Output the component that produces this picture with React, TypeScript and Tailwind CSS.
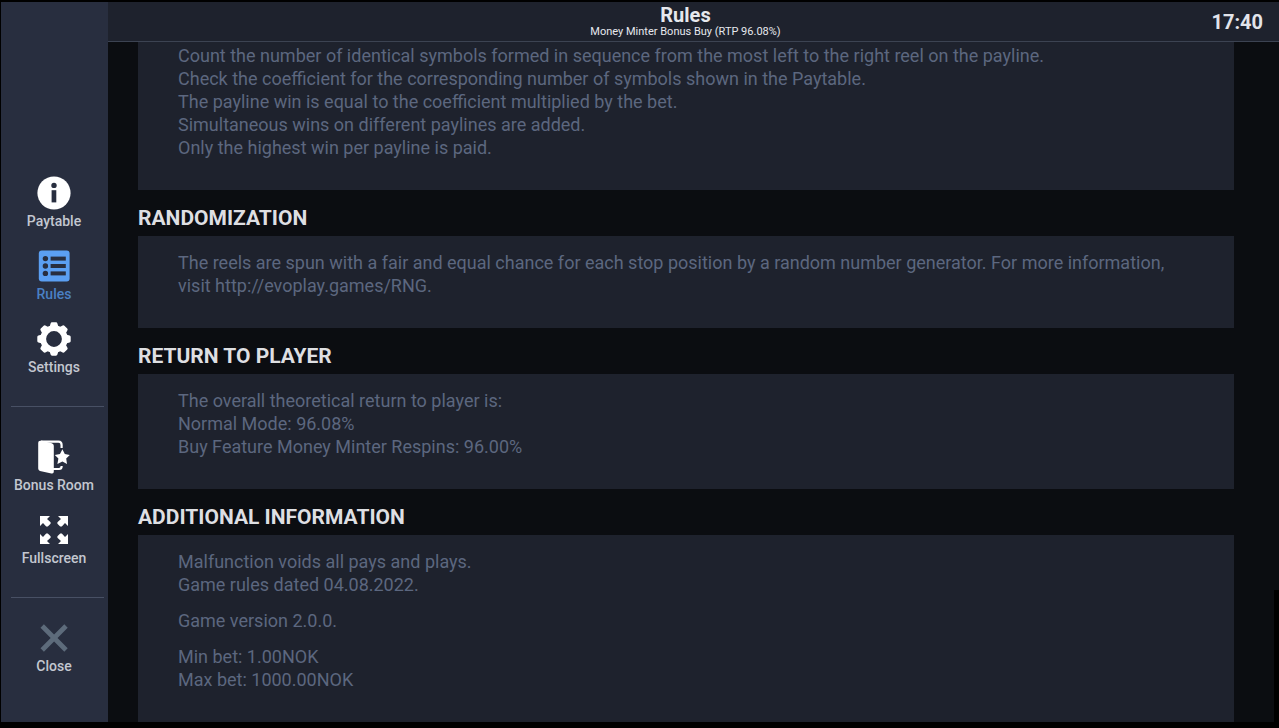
import type { ReactNode } from 'react';

function InfoIcon() {
  return (
    <svg viewBox="0 0 34 34" className="h-[34px] w-[34px]">
      <circle cx="17" cy="17" r="16.6" fill="#ffffff" />
      <circle cx="17" cy="9.4" r="2.7" fill="#282e3f" />
      <path d="M14.6 14.2h4.7v12.2h-4.7z" fill="#282e3f" />
    </svg>
  );
}

function RulesIcon() {
  return (
    <svg viewBox="0 0 34 34" className="h-[34px] w-[34px]">
      <rect x="1.8" y="1.4" width="30.8" height="31" rx="3" fill="#5b9ff2" />
      {[9.6, 17, 24.4].map((y) => (
        <g key={y} fill="#282e3f">
          <circle cx="8.4" cy={y} r="2.7" />
          <rect x="13.6" y={y - 2} width="15.2" height="4" />
        </g>
      ))}
    </svg>
  );
}

function GearIcon() {
  return (
    <svg viewBox="0 0 34 34" className="h-[34px] w-[34px]">
      <circle cx="17" cy="17" r="10.8" fill="none" stroke="#ffffff" strokeWidth="5.8" />
      {[0, 45, 90, 135, 180, 225, 270, 315].map((angle) => (
        <path
          key={angle}
          d="M12.2 6L13.6 1.4Q13.9 0.3 15 0.3H19Q20.1 0.3 20.4 1.4L21.8 6Z"
          fill="#ffffff"
          transform={`rotate(${angle} 17 17)`}
        />
      ))}
    </svg>
  );
}

function BonusRoomIcon() {
  return (
    <svg viewBox="0 0 34 34" className="h-[34px] w-[34px]">
      <path
        d="M4 1.6H21.5Q24.6 1.6 24.6 5V8M24.6 26V26.5Q24.6 29 22 29H16"
        fill="none"
        stroke="#ffffff"
        strokeWidth="2.2"
      />
      <path
        d="M3.2 0.7H5L14.8 3.2Q16.8 3.8 16.8 5.8V31.5Q16.8 34 14.4 33.4L3 30.9Q1.2 30.4 1.2 28.6V2.7Q1.2 0.7 3.2 0.7Z"
        fill="#ffffff"
      />
      <path
        d="M25.4 9.3L27.8 14.1L32.8 14.9L29.2 18.6L30 24L25.4 21.4L20.4 24L21.4 18.6L17.8 14.9L23 14.1Z"
        fill="#ffffff"
      />
    </svg>
  );
}

function FullscreenIcon() {
  return (
    <svg viewBox="0 0 34 34" className="h-[34px] w-[34px]">
      {[0, 90, 180, 270].map((angle) => (
        <path
          key={angle}
          d="M3 3H13L10 6L13.6 9.2V10.8L10.8 13.6H9.2L6 10L3 13Z"
          fill="#ffffff"
          transform={`rotate(${angle} 17 17)`}
        />
      ))}
    </svg>
  );
}

function CloseIcon() {
  return (
    <svg viewBox="0 0 34 34" className="h-[34px] w-[34px]">
      <path d="M5.2 5L29 29M29 5L5.2 29" stroke="#5d6b7b" strokeWidth="4.8" />
    </svg>
  );
}

const menuGroups = [
  [
    { label: 'Paytable', icon: InfoIcon },
    { label: 'Rules', icon: RulesIcon, active: true },
    { label: 'Settings', icon: GearIcon },
  ],
  [
    { label: 'Bonus Room', icon: BonusRoomIcon },
    { label: 'Fullscreen', icon: FullscreenIcon },
  ],
];

function MenuButton({ label, active, children }: { label: string; active?: boolean; children: ReactNode }) {
  return (
    <button type="button" className="flex w-full cursor-pointer flex-col items-center gap-[3px] pr-[7px]">
      {children}
      <span className={`text-[14px] leading-4 font-medium ${active ? 'text-[#4a80c4]' : 'text-[#c3c7d0]'}`}>
        {label}
      </span>
    </button>
  );
}

function Sidebar() {
  return (
    <nav className="ml-px flex w-[107px] shrink-0 flex-col justify-end bg-[#282e3f] pr-1 pb-12 pl-2.5">
      {menuGroups.map((group, index) => (
        <div
          key={index}
          className={`flex flex-col gap-5 border-b border-[#485064] pb-[31px] ${index > 0 ? 'pt-[33px]' : ''}`}
        >
          {group.map((item) => (
            <MenuButton key={item.label} label={item.label} active={item.active}>
              <item.icon />
            </MenuButton>
          ))}
        </div>
      ))}
      <div className="pt-[23px]">
        <MenuButton label="Close">
          <CloseIcon />
        </MenuButton>
      </div>
    </nav>
  );
}

const sections = [
  {
    title: 'Randomization',
    paragraphs: [
      [
        'The reels are spun with a fair and equal chance for each stop position by a random number generator. For more information, visit http://evoplay.games/RNG.',
      ],
    ],
  },
  {
    title: 'Return to player',
    paragraphs: [
      [
        'The overall theoretical return to player is:',
        'Normal Mode: 96.08%',
        'Buy Feature Money Minter Respins: 96.00%',
      ],
    ],
  },
  {
    title: 'Additional information',
    paragraphs: [
      ['Malfunction voids all pays and plays.', 'Game rules dated 04.08.2022.'],
      ['Game version 2.0.0.'],
      ['Min bet: 1.00NOK', 'Max bet: 1000.00NOK'],
    ],
  },
];

const paylineRules = [
  'Count the number of identical symbols formed in sequence from the most left to the right reel on the payline.',
  'Check the coefficient for the corresponding number of symbols shown in the Paytable.',
  'The payline win is equal to the coefficient multiplied by the bet.',
  'Simultaneous wins on different paylines are added.',
  'Only the highest win per payline is paid.',
];

function Lines({ lines }: { lines: string[] }) {
  return (
    <div>
      {lines.map((line) => (
        <p key={line}>{line}</p>
      ))}
    </div>
  );
}

export default function App() {
  return (
    <div className="flex h-screen bg-black pt-0.5 pb-1.5 font-['Roboto',sans-serif]">
      <Sidebar />

      <div className="flex min-w-0 flex-1 flex-col">
        <header className="grid h-10 shrink-0 grid-cols-[1fr_auto_1fr] items-center border-b border-[#3c4352] bg-[#1e222d] pr-4">
          <div className="col-start-2 text-center text-[#e6e8ed]">
            <h1 className="text-[20px] leading-5 font-bold">Rules</h1>
            <p className="text-[11px] leading-[14px]">Money Minter Bonus Buy (RTP 96.08%)</p>
          </div>
          <time className="text-right text-[20px] leading-6 font-bold text-[#e2e4ea]">17:40</time>
        </header>

        <main className="relative min-h-0 flex-1 overflow-hidden bg-[#0b0d11] pr-[45px] pl-[30px] text-[18px] leading-[23px] text-[#5c677f]">
          <div className="bg-[#1e222d] px-10 pt-0.5 pb-[31px]">
            <Lines lines={paylineRules} />
          </div>

          {sections.map((section) => (
            <section key={section.title}>
              <h2 className="pt-4 pb-1.5 text-[21px] leading-6 font-bold text-[#dedfe2] uppercase">
                {section.title}
              </h2>
              <div className="flex flex-col gap-[13px] bg-[#1e222d] px-10 pt-[15px] pb-[31px]">
                {section.paragraphs.map((lines) => (
                  <Lines key={lines[0]} lines={lines} />
                ))}
              </div>
            </section>
          ))}

          {/* Scroll thumb */}
          <div className="absolute right-0 bottom-0 h-[132px] w-[5px] bg-black" />
        </main>
      </div>
    </div>
  );
}
